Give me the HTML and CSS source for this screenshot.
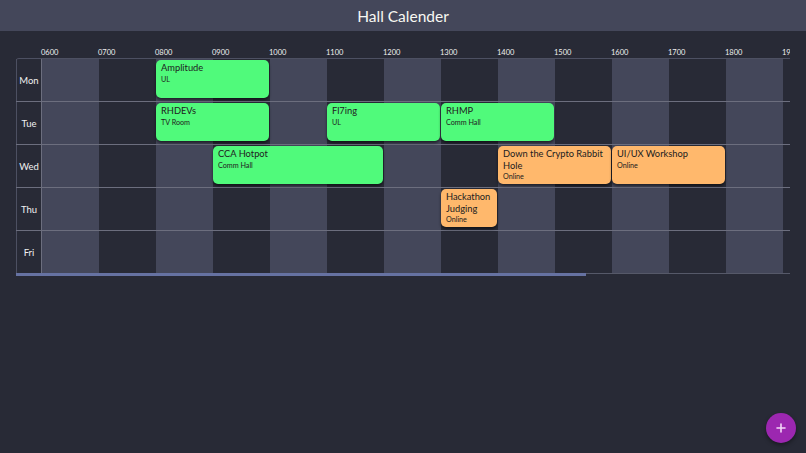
FILE: index.html
```html
<!DOCTYPE html>
<html>
<head>
<meta charset="utf-8">
<link rel="stylesheet" href="styles.css">
</head>
<body>
<header class="topbar"><h1 class="title">Hall Calender</h1></header>
<main class="main">
  <div class="scroller">
    <div class="cal">
      <div class="hours">
        <div class="corner"></div>
        <div class="hour">0600</div><div class="hour">0700</div><div class="hour">0800</div><div class="hour">0900</div>
        <div class="hour">1000</div><div class="hour">1100</div><div class="hour">1200</div><div class="hour">1300</div>
        <div class="hour">1400</div><div class="hour">1500</div><div class="hour">1600</div><div class="hour">1700</div>
        <div class="hour">1800</div><div class="hour">1900</div><div class="hour">2000</div><div class="hour">2100</div>
        <div class="hour">2200</div><div class="hour">2300</div>
      </div>

      <div class="row first">
        <div class="day">Mon</div>
        <div class="cell c1 l"></div><div class="cell c2"></div><div class="cell c3 l"></div><div class="cell c4"></div><div class="cell c5 l"></div><div class="cell c6"></div><div class="cell c7 l"></div><div class="cell c8"></div><div class="cell c9 l"></div><div class="cell c10"></div><div class="cell c11 l"></div><div class="cell c12"></div><div class="cell c13 l"></div><div class="cell c14"></div><div class="cell c15 l"></div><div class="cell c16"></div><div class="cell c17 l"></div><div class="cell c18"></div>
        <div class="event green s3 w2"><div class="ev-title">Amplitude</div><div class="ev-sub">UL</div></div>
      </div>

      <div class="row">
        <div class="day">Tue</div>
        <div class="cell c1 l"></div><div class="cell c2"></div><div class="cell c3 l"></div><div class="cell c4"></div><div class="cell c5 l"></div><div class="cell c6"></div><div class="cell c7 l"></div><div class="cell c8"></div><div class="cell c9 l"></div><div class="cell c10"></div><div class="cell c11 l"></div><div class="cell c12"></div><div class="cell c13 l"></div><div class="cell c14"></div><div class="cell c15 l"></div><div class="cell c16"></div><div class="cell c17 l"></div><div class="cell c18"></div>
        <div class="event green s3 w2"><div class="ev-title">RHDEVs</div><div class="ev-sub">TV Room</div></div>
        <div class="event green s6 w2"><div class="ev-title">Fl7ing</div><div class="ev-sub">UL</div></div>
        <div class="event green s8 w2"><div class="ev-title">RHMP</div><div class="ev-sub">Comm Hall</div></div>
      </div>

      <div class="row">
        <div class="day">Wed</div>
        <div class="cell c1 l"></div><div class="cell c2"></div><div class="cell c3 l"></div><div class="cell c4"></div><div class="cell c5 l"></div><div class="cell c6"></div><div class="cell c7 l"></div><div class="cell c8"></div><div class="cell c9 l"></div><div class="cell c10"></div><div class="cell c11 l"></div><div class="cell c12"></div><div class="cell c13 l"></div><div class="cell c14"></div><div class="cell c15 l"></div><div class="cell c16"></div><div class="cell c17 l"></div><div class="cell c18"></div>
        <div class="event green s4 w3"><div class="ev-title">CCA Hotpot</div><div class="ev-sub">Comm Hall</div></div>
        <div class="event orange s9 w2"><div class="ev-title">Down the Crypto Rabbit Hole</div><div class="ev-sub">Online</div></div>
        <div class="event orange s11 w2"><div class="ev-title">UI/UX Workshop</div><div class="ev-sub">Online</div></div>
      </div>

      <div class="row">
        <div class="day">Thu</div>
        <div class="cell c1 l"></div><div class="cell c2"></div><div class="cell c3 l"></div><div class="cell c4"></div><div class="cell c5 l"></div><div class="cell c6"></div><div class="cell c7 l"></div><div class="cell c8"></div><div class="cell c9 l"></div><div class="cell c10"></div><div class="cell c11 l"></div><div class="cell c12"></div><div class="cell c13 l"></div><div class="cell c14"></div><div class="cell c15 l"></div><div class="cell c16"></div><div class="cell c17 l"></div><div class="cell c18"></div>
        <div class="event orange s8 w1"><div class="ev-title">Hackathon Judging</div><div class="ev-sub">Online</div></div>
      </div>

      <div class="row last">
        <div class="day">Fri</div>
        <div class="cell c1 l"></div><div class="cell c2"></div><div class="cell c3 l"></div><div class="cell c4"></div><div class="cell c5 l"></div><div class="cell c6"></div><div class="cell c7 l"></div><div class="cell c8"></div><div class="cell c9 l"></div><div class="cell c10"></div><div class="cell c11 l"></div><div class="cell c12"></div><div class="cell c13 l"></div><div class="cell c14"></div><div class="cell c15 l"></div><div class="cell c16"></div><div class="cell c17 l"></div><div class="cell c18"></div>
      </div>
    </div>
  </div>
  <div class="scrollbar"><div class="thumb"></div></div>
</main>
<button class="fab" aria-label="add">
  <svg width="10" height="10" viewBox="0 0 10 10"><path d="M5 1v8M1 5h8" stroke="#f3d8f8" stroke-width="1.6" stroke-linecap="round"/></svg>
</button>
</body>
</html>
```
FILE: styles.css
```css
html, body {
  margin: 0;
  padding: 0;
  background: #282a36;
  font-family: Lato, "Noto Sans", sans-serif;
  height: 100%;
  overflow: hidden;
}
.topbar {
  height: 31px;
  background: #44475a;
  display: flex;
  align-items: center;
  justify-content: center;
}
.title {
  margin: 0;
  font-size: 15.5px;
  font-weight: 400;
  color: #f8f8f2;
}
.main {
  padding: 9px 16px 0 16px;
}
.scroller {
  width: 774px;
  overflow: hidden;
}
.scrollbar {
  width: 774px;
  height: 3px;
  border-top: 1px solid #565969;
  box-sizing: border-box;
}
.thumb {
  width: 570px;
  height: 3px;
  margin-top: -1px;
  background: #6672a2;
}
.cal {
  width: 1052px;
}
.hours {
  display: grid;
  grid-template-columns: 26px repeat(18, 57px);
  height: 18px;
  align-items: end;
}
.hour {
  font-size: 7.5px;
  color: #f0f0f0;
  line-height: 10px;
  margin-left: -1px;
}
.row {
  display: grid;
  grid-template-columns: 26px repeat(18, 57px);
  grid-template-rows: 42px;
  border-bottom: 1px solid #6c6e7e;
}
.row.first {
  border-top: 1px solid #4d5062;
  border-top-left-radius: 3px;
}
.row.last {
  border-bottom: none;
}
.day {
  grid-row: 1;
  grid-column: 1;
  display: flex;
  align-items: center;
  justify-content: center;
  font-size: 9.5px;
  color: #f0f0f0;
  border-left: 1px solid #4d5062;
  border-right: 1px solid #6c6e7e;
}
.cell { grid-row: 1; background: #282a36; }
.cell.l { background: #44475a; }
.c1 { grid-column: 2; } .c2 { grid-column: 3; } .c3 { grid-column: 4; } .c4 { grid-column: 5; }
.c5 { grid-column: 6; } .c6 { grid-column: 7; } .c7 { grid-column: 8; } .c8 { grid-column: 9; }
.c9 { grid-column: 10; } .c10 { grid-column: 11; } .c11 { grid-column: 12; } .c12 { grid-column: 13; }
.c13 { grid-column: 14; } .c14 { grid-column: 15; } .c15 { grid-column: 16; } .c16 { grid-column: 17; }
.c17 { grid-column: 18; } .c18 { grid-column: 19; }

.event {
  grid-row: 1;
  z-index: 1;
  margin: 1px 1px 3px 0;
  border-radius: 5px;
  padding: 2px 4px 3px 5px;
  box-shadow: 0 2px 3px rgba(0,0,0,0.55);
  color: #202020;
  overflow: hidden;
}
.green { background: #50fa7b; }
.orange { background: #ffb86c; }
.s3 { grid-column-start: 4; }
.s4 { grid-column-start: 5; }
.s6 { grid-column-start: 7; }
.s8 { grid-column-start: 9; }
.s9 { grid-column-start: 10; }
.s11 { grid-column-start: 12; }
.w1 { grid-column-end: span 1; }
.w2 { grid-column-end: span 2; }
.w3 { grid-column-end: span 3; }
.ev-title {
  font-size: 9.3px;
  line-height: 11.5px;
}
.ev-sub {
  font-size: 7.2px;
  line-height: 10px;
  margin-top: 1px;
}
.fab {
  position: fixed;
  left: 766px;
  top: 413px;
  width: 30px;
  height: 30px;
  border-radius: 50%;
  border: none;
  background: #9c27b0;
  box-shadow: 0 2px 4px rgba(0,0,0,0.4);
  display: flex;
  align-items: center;
  justify-content: center;
  padding: 0;
}
```
